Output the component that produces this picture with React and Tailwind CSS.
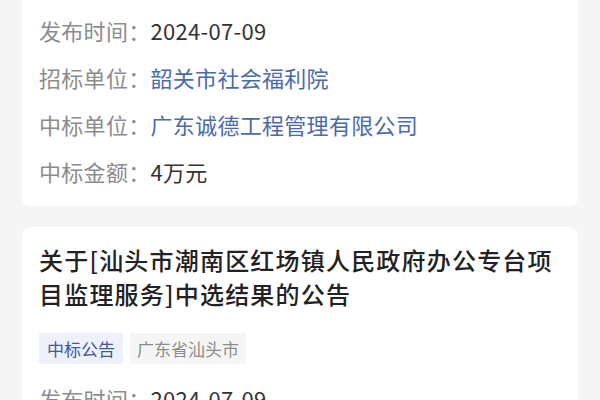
export default function App() {
  const font = { fontFamily: '"Noto Sans CJK SC", "Noto Sans", sans-serif' };
  const Row = ({ label, value, blue }) => (
    <div className="flex text-[22px] leading-[30px] tracking-[0.3px]">
      <span className="text-[#8c8c8c]">{label}：</span>
      <span className={blue ? "text-[#4a6aa8]" : "text-[#333333]"}>{value}</span>
    </div>
  );
  return (
    <div className="w-[600px] h-[400px] overflow-hidden bg-[#f5f5f5]" style={font}>
      <div className="px-[22px] -mt-[20px] flex flex-col gap-[21px]">
        <div className="bg-white rounded-[8px] pl-[17px] pr-[17px] pt-[35px] pb-[20px] flex flex-col gap-[17px]">
          <Row label="发布时间" value="2024-07-09" />
          <Row label="招标单位" value="韶关市社会福利院" blue />
          <Row label="中标单位" value="广东诚德工程管理有限公司" blue />
          <Row label="中标金额" value="4万元" />
        </div>
        <div className="bg-white rounded-[8px] pl-[17px] pr-[17px] pt-[16px] pb-[17px] flex flex-col">
          <div className="text-[24px] leading-[34px] tracking-[1.2px] font-medium text-[#222222]">
            关于[汕头市潮南区红场镇人民政府办公专台项目监理服务]中选结果的公告
          </div>
          <div className="flex gap-[7px] mt-[22px]">
            <span className="h-[31px] px-[8px] flex items-center text-[17px] bg-[#eef1fa] text-[#3d5a9e] rounded-[2px]">中标公告</span>
            <span className="h-[31px] px-[7px] flex items-center text-[17px] bg-[#f5f5f5] text-[#8c8c8c] rounded-[2px]">广东省汕头市</span>
          </div>
          <div className="mt-[19px] flex flex-col gap-[17px]">
            <Row label="发布时间" value="2024-07-09" />
            <Row label="招标单位" value="汕头市潮南区红场镇人民政府" blue />
          </div>
        </div>
      </div>
    </div>
  );
}
